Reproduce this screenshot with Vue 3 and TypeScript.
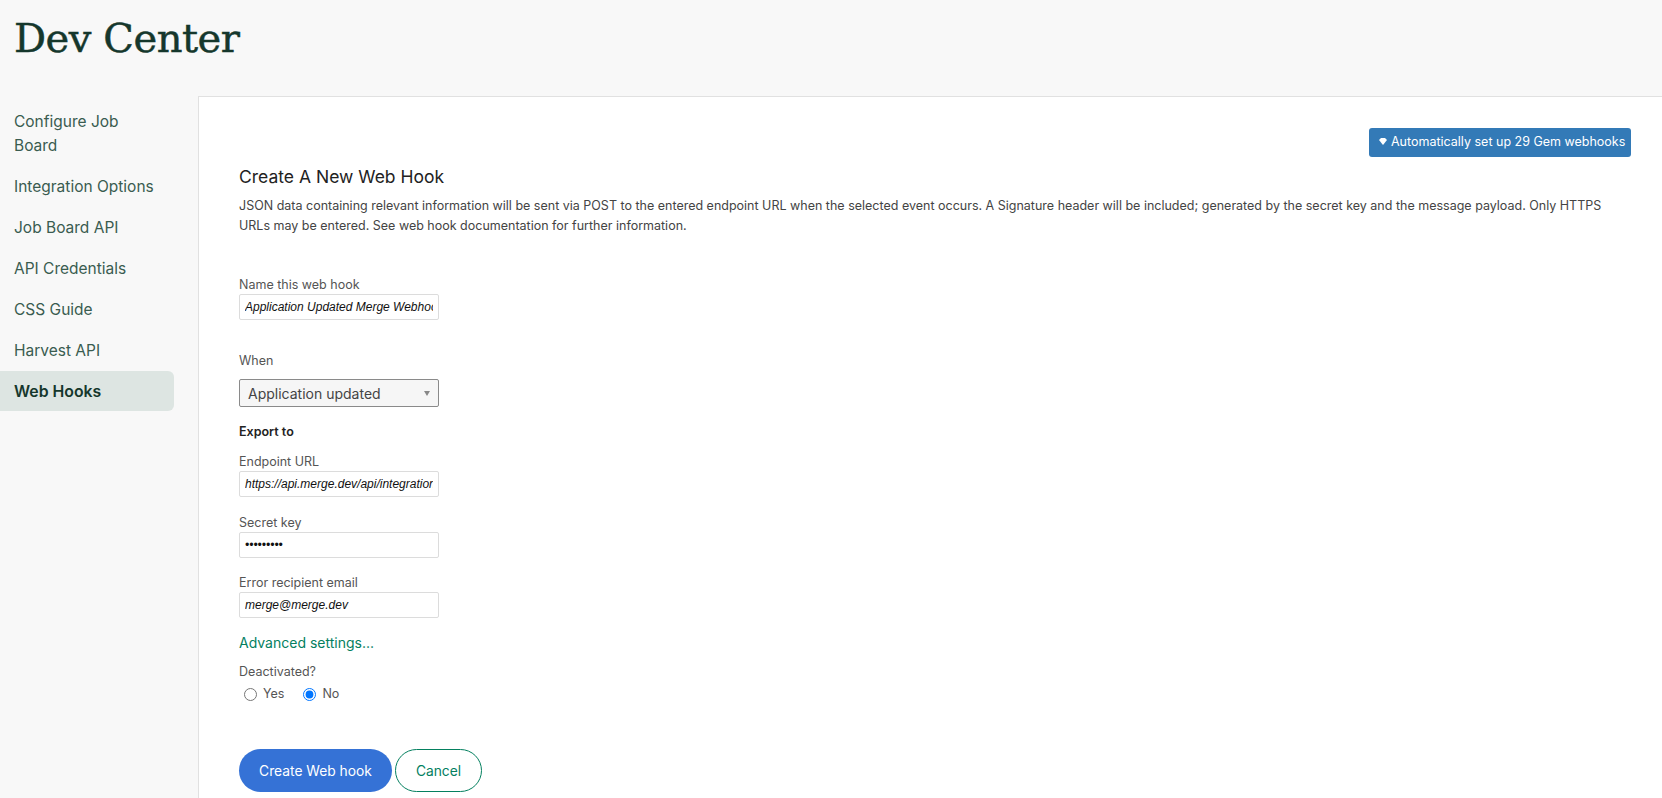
<script setup lang="ts">
import { ref } from "vue";

const navItems = [
  "Configure Job Board",
  "Integration Options",
  "Job Board API",
  "API Credentials",
  "CSS Guide",
  "Harvest API",
  "Web Hooks",
];

const hookName = ref("Application Updated Merge Webhook");
const endpoint = ref("https://api.merge.dev/api/integrations/webhook-receiver");
const secret = ref("secretkey");
const email = ref("merge@merge.dev");
const deactivated = ref("no");
</script>

<template>
  <div class="page">
    <header class="page-header">
      <h1>Dev Center</h1>
    </header>
    <div class="layout">
      <nav class="sidebar">
        <a
          v-for="item in navItems"
          :key="item"
          class="nav-item"
          :class="{ active: item === 'Web Hooks' }"
          href="#"
        >{{ item }}</a>
      </nav>
      <main class="panel">
        <div class="panel-top">
          <button class="gem-button" type="button">
            <svg width="8" height="7" viewBox="0 0 8 7" aria-hidden="true">
              <path d="M0 2 2 0h4l2 2-4 5z" fill="#fff" />
            </svg>
            <span>Automatically set up 29 Gem webhooks</span>
          </button>
        </div>
        <h2>Create A New Web Hook</h2>
        <p class="intro">
          JSON data containing relevant information will be sent via POST to the entered endpoint URL when the selected event occurs. A Signature header will be included; generated by the secret key and the message payload. Only HTTPS URLs may be entered. See web hook documentation for further information.
        </p>
        <form class="hook-form" @submit.prevent>
          <label class="field name-field">
            <span>Name this web hook</span>
            <input v-model="hookName" type="text" />
          </label>
          <label class="field when-field">
            <span>When</span>
            <div class="select-box">
              <span>Application updated</span>
              <i class="caret"></i>
            </div>
          </label>
          <div class="export-title">Export to</div>
          <label class="field">
            <span>Endpoint URL</span>
            <input v-model="endpoint" type="text" />
          </label>
          <label class="field">
            <span>Secret key</span>
            <input v-model="secret" type="password" />
          </label>
          <label class="field">
            <span>Error recipient email</span>
            <input v-model="email" type="text" />
          </label>
          <a class="advanced" href="#">Advanced settings...</a>
          <div class="deactivated">
            <div>Deactivated?</div>
            <div class="radios">
              <label><input v-model="deactivated" type="radio" value="yes" /> Yes</label>
              <label><input v-model="deactivated" type="radio" value="no" /> No</label>
            </div>
          </div>
          <div class="actions">
            <button class="btn-primary" type="submit">Create Web hook</button>
            <button class="btn-cancel" type="button">Cancel</button>
          </div>
        </form>
      </main>
    </div>
  </div>
</template>

<style>
html,
body {
  margin: 0;
  height: 100%;
  overflow: hidden;
  background: #f8f8f8;
}
</style>

<style scoped>
.page {
  height: 798px;
  display: flex;
  flex-direction: column;
  font-family: Inter, "Liberation Sans", sans-serif;
  background: #f8f8f8;
  overflow: hidden;
}
.page-header {
  height: 96px;
  flex: none;
  padding-left: 14px;
  box-sizing: border-box;
}
h1 {
  margin: 0;
  padding-top: 10px;
  font-family: "DejaVu Serif", serif;
  font-weight: 400;
  font-size: 40px;
  line-height: 56px;
  color: #15372c;
  letter-spacing: -0.45px;
  -webkit-text-stroke: 0.5px #15372c;
}
.layout {
  flex: 1;
  display: flex;
  min-height: 0;
}
.sidebar {
  width: 198px;
  flex: none;
  box-sizing: border-box;
  padding: 14px 24px 0 0;
  display: flex;
  flex-direction: column;
}
.nav-item {
  display: block;
  padding: 0 14px;
  margin-bottom: 17px;
  font-size: 15.5px;
  line-height: 24px;
  color: #3a5c50;
  text-decoration: none;
}
.nav-item.active {
  margin-top: -9px;
  padding: 9px 14px 7px;
  background: #dde5e2;
  border-radius: 0 6px 6px 0;
  font-size: 15.8px;
  font-weight: 600;
  color: #15372c;
}
.panel {
  flex: 1;
  background: #fff;
  border-top: 1px solid #e1e1e1;
  border-left: 1px solid #e1e1e1;
  padding: 31px 31px 0 40px;
  box-sizing: border-box;
  color: #222;
}
.panel-top {
  display: flex;
  justify-content: flex-end;
}
.gem-button {
  height: 29px;
  width: 262px;
  padding: 0 0 2px 10px;
  display: flex;
  align-items: center;
  gap: 4px;
  border: none;
  border-radius: 3px;
  background: #337ab7;
  color: #fff;
  font-family: inherit;
  font-size: 12.5px;
  white-space: nowrap;
}
.gem-button svg {
  flex: none;
}
h2 {
  margin: 9px 0 0;
  font-size: 17.5px;
  line-height: 22px;
  font-weight: 400;
  color: #222;
}
.intro {
  margin: 8px 0 0;
  font-size: 12.5px;
  line-height: 20px;
  color: #444;
}
.hook-form {
  margin-top: 39px;
  font-size: 12.5px;
  color: #555;
}
.field {
  display: block;
  margin-bottom: 15.5px;
}
.field > span {
  display: block;
  line-height: 19px;
}
.field input {
  display: block;
  width: 200px;
  height: 26px;
  box-sizing: border-box;
  margin: 0;
  padding: 0 5px;
  border: 1px solid #dcdcdc;
  border-radius: 2px;
  font-family: "Liberation Sans", sans-serif;
  font-style: italic;
  font-size: 12px;
  color: #111;
  background: #fff;
}
.name-field {
  margin-bottom: 31px;
}
.when-field > span {
  margin-bottom: 9px;
}
.when-field {
  margin-bottom: 16px;
}
.select-box {
  width: 200px;
  height: 28px;
  box-sizing: border-box;
  border: 1px solid #8a8a8a;
  border-radius: 2px;
  background: #f6f6f6;
  padding: 0 8px;
  display: flex;
  align-items: center;
  justify-content: space-between;
  font-size: 14px;
  color: #444;
}
.caret {
  width: 0;
  height: 0;
  border-left: 3px solid transparent;
  border-right: 3px solid transparent;
  border-top: 5px solid #888;
}
.export-title {
  font-weight: 600;
  color: #222;
  line-height: 18px;
  margin-bottom: 11px;
}
.advanced {
  display: block;
  color: #04805f;
  font-size: 14px;
  line-height: 18px;
  text-decoration: none;
  margin-top: 16px;
}
.deactivated {
  margin-top: 11px;
  line-height: 18px;
}
.radios {
  display: flex;
  gap: 19px;
  padding-left: 5px;
  margin-top: 4px;
}
.radios label {
  display: flex;
  align-items: center;
  gap: 6px;
}
.radios input {
  margin: 0;
  width: 13px;
  height: 13px;
}
.actions {
  display: flex;
  gap: 3px;
  margin-top: 46px;
}
.actions button {
  height: 43px;
  border-radius: 22px;
  font-family: inherit;
  font-size: 13.8px;
}
.btn-primary {
  width: 153px;
  background: #3572d6;
  border: none;
  color: #fff;
}
.btn-cancel {
  width: 87px;
  background: #fff;
  border: 1px solid #04805f;
  color: #04805f;
}
</style>
